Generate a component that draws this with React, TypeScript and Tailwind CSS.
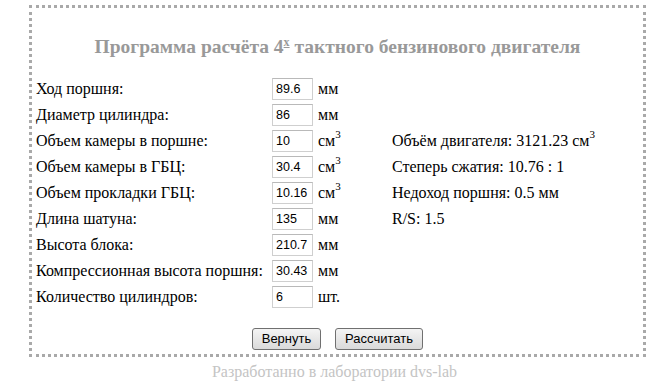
const rows: { label: string; value: string; unit: string; cube?: boolean; result?: React.ReactNode }[] = [
  { label: "Ход поршня:", value: "89.6", unit: "мм" },
  { label: "Диаметр цилиндра:", value: "86", unit: "мм" },
  {
    label: "Объем камеры в поршне:",
    value: "10",
    unit: "см",
    cube: true,
    result: (
      <>
        Объём двигателя: 3121.23 см<sup className="text-[11px] -top-[0.7em]">3</sup>
      </>
    ),
  },
  { label: "Объем камеры в ГБЦ:", value: "30.4", unit: "см", cube: true, result: "Степерь сжатия: 10.76 : 1" },
  { label: "Объем прокладки ГБЦ:", value: "10.16", unit: "см", cube: true, result: "Недоход поршня: 0.5 мм" },
  { label: "Длина шатуна:", value: "135", unit: "мм", result: "R/S: 1.5" },
  { label: "Высота блока:", value: "210.7", unit: "мм" },
  { label: "Компрессионная высота поршня:", value: "30.43", unit: "мм" },
  { label: "Количество цилиндров:", value: "6", unit: "шт." },
];

export default function App() {
  return (
    <div className="w-[669px] h-[388px] bg-white font-['Liberation_Serif',serif] text-black">
      <div className="ml-[29px] mt-[5px] w-[617px] h-[352px] border-[3px] border-dotted border-[#a9a9a9] flex flex-col">
        <h1 className="mt-[27px] text-center text-[19.5px] font-bold text-[#999999] leading-[24px]">
          Программа расчёта 4
          <sup className="text-[12px] underline -top-[0.6em]">x</sup> тактного бензинового двигателя
        </h1>

        <div className="mt-[17px] ml-[4px] flex flex-col">
          {rows.map((r, i) => (
            <div key={i} className="flex items-center h-[26px] text-[16px]">
              <span className="w-[236px] whitespace-nowrap">{r.label}</span>
              <input
                readOnly
                value={r.value}
                className="w-[41px] h-[22px] border border-[#cfcfcf] border-t-[#b9b9b9] pl-[3px] pr-[1px] text-[12.5px] font-['Liberation_Sans',sans-serif] text-black outline-none"
              />
              <span className="ml-[5px] w-[74px] whitespace-nowrap">
                {r.unit}
                {r.cube && <sup className="text-[11px] -top-[0.7em]">3</sup>}
              </span>
              {r.result && <span className="whitespace-nowrap">{r.result}</span>}
            </div>
          ))}
        </div>

        <div className="mt-[18px] flex justify-center gap-[14px] font-['Liberation_Sans',sans-serif] text-[13px]">
          <button className="w-[69px] h-[22px] rounded-[3px] border border-[#707070] bg-gradient-to-b from-[#f4f4f4] to-[#dadada]">
            Вернуть
          </button>
          <button className="w-[88px] h-[22px] rounded-[3px] border border-[#707070] bg-gradient-to-b from-[#f4f4f4] to-[#dadada]">
            Рассчитать
          </button>
        </div>
      </div>
      <p className="mt-[6px] text-center text-[16px] text-[#c4c4c4] leading-[18px]">
        Разработанно в лаборатории dvs-lab
      </p>
    </div>
  );
}
